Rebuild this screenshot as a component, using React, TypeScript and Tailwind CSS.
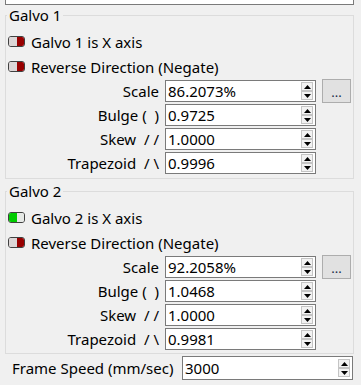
import React from "react";

type RowProps = {
  label: string;
  value: string;
  more?: boolean;
};

function Toggle({ on }: { on: boolean }) {
  return (
    <span className="flex h-[11px] w-[17px] shrink-0 overflow-hidden rounded-[3px] border border-[#404040]">
      <span className={on ? "flex-1 bg-[#00cc00]" : "flex-1 bg-[#dcd6d6]"} />
      <span className={on ? "flex-1 bg-[#e6e9e6]" : "flex-1 bg-[#980000]"} />
    </span>
  );
}

function Arrow({ up }: { up?: boolean }) {
  return (
    <span className="flex h-[9px] w-[12px] items-center justify-center border border-[#c4c4c4] bg-[#f2f2f2]">
      <svg width="7" height="4" viewBox="0 0 7 4">
        <path d={up ? "M0 4 L3.5 0 L7 4 Z" : "M0 0 L3.5 4 L7 0 Z"} fill="#000" />
      </svg>
    </span>
  );
}

function SpinBox({ value, className }: { value: string; className: string }) {
  return (
    <div className={"flex items-center border border-[#7a7a7a] bg-white pl-[2px] pr-[2px] " + className}>
      <span className="flex-1 text-black">{value}</span>
      <div className="flex flex-col">
        <Arrow up />
        <Arrow />
      </div>
    </div>
  );
}

function Row({ label, value, more }: RowProps) {
  return (
    <div className="flex h-[24px] items-center">
      <span className="w-[153px] whitespace-pre text-right">{label}</span>
      <SpinBox value={value} className="ml-[6px] h-[22px] w-[151px]" />
      {more && (
        <button className="ml-[6px] flex h-[24px] w-[29px] items-end justify-center border border-[#adadad] bg-[#e1e1e1] pb-[3px] text-[13px] leading-[13px] text-[#1c2b4a]">
          ...
        </button>
      )}
    </div>
  );
}

function ToggleRow({ on, label }: { on: boolean; label: string }) {
  return (
    <div className="flex h-[25px] items-center gap-[6px] pl-[2px]">
      <Toggle on={on} />
      <span>{label}</span>
    </div>
  );
}

function Galvo({ n, isX, values, className }: { n: number; isX: boolean; values: string[]; className: string }) {
  return (
    <fieldset className={"ml-[5px] w-[349px] border border-[#dcdcdc] " + className}>
      <legend className="ml-[1px] px-[2px] leading-[18px]">Galvo {n}</legend>
      <div className="flex flex-col pt-[5px]">
        <ToggleRow on={isX} label={`Galvo ${n} is X axis`} />
        <ToggleRow on={false} label="Reverse Direction (Negate)" />
        <Row label="Scale" value={values[0]} more />
        <Row label="Bulge (  )" value={values[1]} />
        <Row label="Skew  / /" value={values[2]} />
        <Row label={"Trapezoid  / \\"} value={values[3]} />
      </div>
    </fieldset>
  );
}

export default function App() {
  return (
    <div className="h-[385px] w-[361px] overflow-hidden bg-[#f0f0f0] font-['Noto_Sans','Liberation_Sans',sans-serif] text-[15px] leading-[20px] text-black">
      <div className="ml-[5px] h-[5px] w-[349px] border-x border-b border-[#7a7a7a] bg-white" />
      <Galvo n={1} isX={false} values={["86.2073%", "0.9725", "1.0000", "0.9996"]} className="mt-[1px] pb-[3px]" />
      <Galvo n={2} isX={true} values={["92.2058%", "1.0468", "1.0000", "0.9981"]} className="mt-[3px] pb-[2px]" />
      <div className="mt-[2px] flex h-[24px] items-center pl-[12px] pr-[8px]">
        <span className="flex-1">Frame Speed (mm/sec)</span>
        <SpinBox value="3000" className="h-[24px] w-[171px]" />
      </div>
    </div>
  );
}
